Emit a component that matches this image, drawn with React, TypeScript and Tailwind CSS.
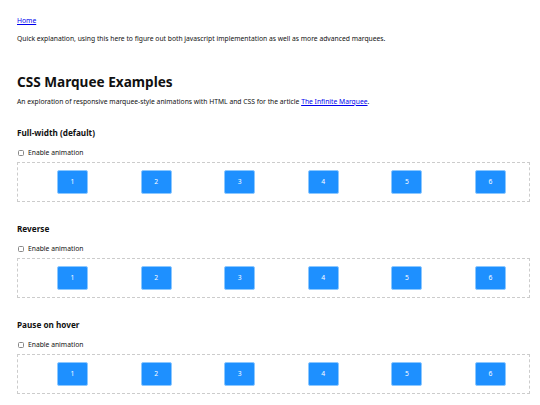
import React from 'react';

const sections = ['Full-width (default)', 'Reverse', 'Pause on hover'];
const items = [1, 2, 3, 4, 5, 6];

function Marquee() {
  return (
    <div className="mt-[4px] h-[40px] border border-dashed border-[#cccccc] flex items-center pl-[39px] gap-[52.6px]">
      {items.map(n => (
        <div
          key={n}
          className="w-[31px] h-[24px] rounded-[2px] bg-[#1e90ff] border border-[#8cc8ff] flex items-center justify-center text-white text-[6.75px]"
        >
          {n}
        </div>
      ))}
    </div>
  );
}

export default function App() {
  return (
    <div
      className="h-[405px] overflow-hidden bg-white text-[#111] pl-[17px] pr-[10px] pt-[16px] text-[6.75px] leading-[10px]"
      style={{ fontFamily: '"Noto Sans", sans-serif' }}
    >
      <a href="#" className="text-[#0000ee] underline">Home</a>
      <p className="mt-[8px]">
        Quick explanation, using this here to figure out both javascript implementation as well as more advanced marquees.
      </p>

      <h1 className="mt-[30px] text-[13.6px] leading-[16px] font-bold">CSS Marquee Examples</h1>
      <p className="mt-[7px]">
        An exploration of responsive marquee-style animations with HTML and CSS for the article{' '}
        <a href="#" className="text-[#0000ee] underline">The Infinite Marquee</a>.
      </p>

      {sections.map((title, i) => (
        <section key={title} className={i === 0 ? 'mt-[21px]' : 'mt-[22px]'}>
          <h3 className="text-[8.2px] font-bold leading-[10px]">{title}</h3>
          <label className="mt-[10px] flex items-center gap-[4px]">
            <span className="ml-[1px] w-[6px] h-[6px] border border-[#8a8a8a] rounded-[1.5px] bg-white" />
            <span>Enable animation</span>
          </label>
          <Marquee />
        </section>
      ))}
    </div>
  );
}
